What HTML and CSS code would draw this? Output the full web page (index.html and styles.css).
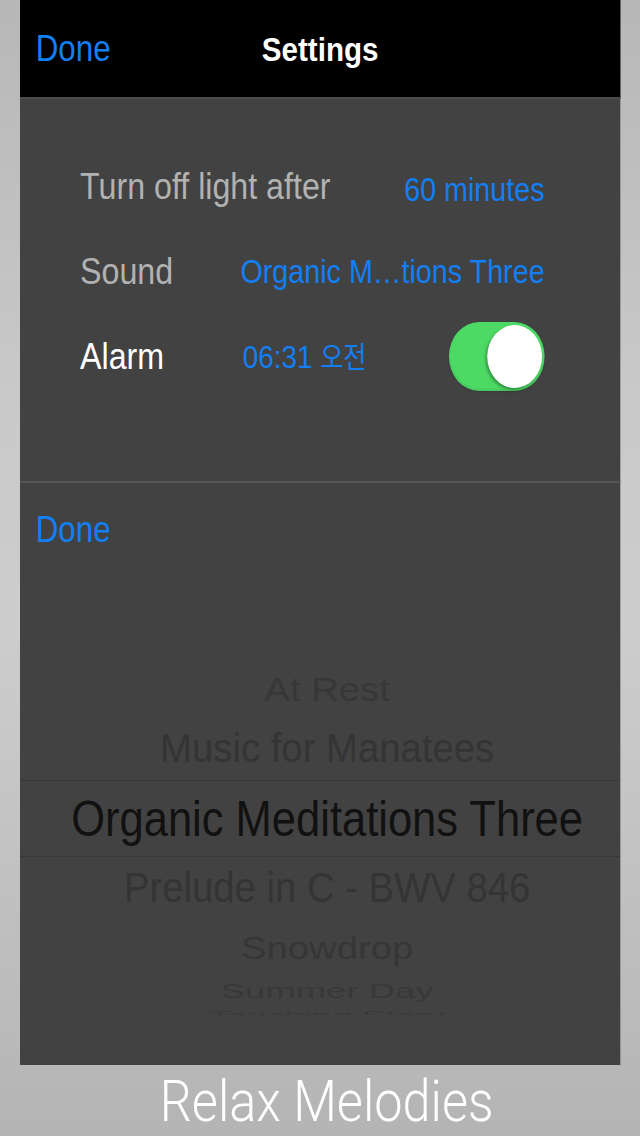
FILE: index.html
```html
<!DOCTYPE html>
<html lang="en">
<head>
    <meta charset="UTF-8">
    <meta name="viewport" content="width=device-width, initial-scale=1.0">
    <title>Relax Melodies - Settings</title>
    <link rel="stylesheet" href="styles.css">
</head>
<body>
    <div class="stage">
        <div class="phone">
            <!-- Navigation bar -->
            <div class="navbar">
                <span class="nav-done">Done</span>
                <span class="nav-title">Settings</span>
                <span></span>
            </div>

            <!-- Settings list -->
            <div class="settings">
                <div class="row">
                    <span class="label">Turn off light after</span>
                    <span class="value value-low">60 minutes</span>
                </div>
                <div class="row">
                    <span class="label">Sound</span>
                    <span class="value">Organic M…tions Three</span>
                </div>
                <div class="row">
                    <span class="label label-on alarm-label">Alarm</span>
                    <span class="value time">06:31 <span class="ko">오전</span></span>
                    <span class="switch"><span class="knob"></span></span>
                </div>
            </div>

            <!-- Sound picker -->
            <div class="picker-head">
                <span class="nav-done">Done</span>
            </div>
            <div class="picker">
                <div class="item item-a"><span>At Rest</span></div>
                <div class="item item-b"><span>Music for Manatees</span></div>
                <div class="item item-selected"><span>Organic Meditations Three</span></div>
                <div class="item item-c"><span>Prelude in C - BWV 846</span></div>
                <div class="item item-d"><span>Snowdrop</span></div>
                <div class="item item-e"><span>Summer Day</span></div>
                <div class="item item-f"><span>Touching Story</span></div>
            </div>
        </div>
        <div class="caption">Relax Melodies</div>
    </div>
</body>
</html>
```

FILE: styles.css
```css
html, body {
    margin: 0;
    height: 1136px;
    overflow: hidden;
}
body {
    font-family: "Liberation Sans", Arial, sans-serif;
    background: linear-gradient(#b7b7b7 0%, #c9c9c9 35%, #cdcdcd 55%, #bdbdbd 85%, #b4b4b4 100%);
}
/* the screen is drawn a bit narrow, so lay out wide and squeeze */
.stage {
    width: 736px;
    margin-right: -96px;
    transform: scaleX(0.87);
    transform-origin: 0 0;
}
.phone {
    margin-left: 23px;
    width: 690px;
    height: 1065px;
    background-color: #424242;
    display: flex;
    flex-direction: column;
}
.navbar {
    height: 97px;
    background-color: #000;
    border-bottom: 2px solid #4b4b4b;
    display: grid;
    grid-template-columns: 1fr auto 1fr;
    align-items: center;
    padding-left: 18px;
    padding-right: 18px;
}
.nav-done {
    color: #127ff4;
    font-size: 36px;
    line-height: 36px;
}
.nav-title {
    color: #fff;
    font-size: 34px;
    font-weight: bold;
    line-height: 36px;
}
.settings {
    padding: 45px 87px 82px 69px;
    border-bottom: 2px solid #555;
}
.row {
    height: 85px;
    display: flex;
    align-items: center;
    justify-content: space-between;
}
.label {
    color: #b2b2b2;
    font-size: 37px;
    line-height: 1;
}
.label-on {
    color: #fff;
}
.alarm-label {
    width: 187px;
}
.value {
    color: #127ff4;
    font-size: 33px;
    line-height: 1;
}
.value-low {
    padding-top: 6px;
}
.time {
    font-size: 32px;
    margin-right: auto;
}
.ko {
    font-family: "Noto Sans CJK KR", sans-serif;
    font-size: 29px;
}
.switch {
    width: 110px;
    height: 69px;
    border-radius: 35px;
    background-color: #4cd964;
    box-shadow: inset 0 -2px 3px rgba(0, 0, 0, 0.08), 0 1px 2px rgba(0, 0, 0, 0.15);
    display: flex;
    align-items: center;
    justify-content: flex-end;
    padding-right: 3px;
    box-sizing: border-box;
}
.knob {
    width: 63px;
    height: 63px;
    border-radius: 50%;
    background-color: #fff;
    box-shadow: -2px 2px 3px rgba(0, 0, 0, 0.3);
}
.picker-head {
    padding: 29px 18px 0;
}
.picker {
    margin-top: 115px;
    padding-left: 16px;
    height: 352px;
    overflow: hidden;
    display: flex;
    flex-direction: column;
}
.item {
    flex-shrink: 0;
    display: flex;
    align-items: center;
    justify-content: center;
    color: #343434;
    font-size: 44px;
    line-height: 1;
    white-space: nowrap;
}
.item span {
    display: inline-block;
}
.item-a { height: 52px; color: #373737; }
.item-a span { transform: scaleY(0.77); }
.item-b { height: 65px; }
.item-b span { transform: scaleY(0.93); }
.item-selected {
    height: 75px;
    margin-left: -16px;
    padding-left: 16px;
    border-top: 1px solid #383838;
    border-bottom: 1px solid #383838;
    color: #111;
    font-size: 50px;
}
.item-c { height: 62px; }
.item-c span { transform: scaleY(0.96); }
.item-d { height: 57px; color: #363636; }
.item-d span { transform: scaleY(0.73); }
.item-e { height: 29px; font-size: 42px; color: #383838; }
.item-e span { transform: scaleY(0.48); }
.item-f { height: 20px; font-size: 41px; color: #3a3a3a; }
.item-f span { transform: scaleY(0.3); }
.caption {
    height: 71px;
    padding-left: 15px;
    display: flex;
    align-items: center;
    justify-content: center;
    color: #fff;
    font-family: Roboto, "Liberation Sans", sans-serif;
    font-weight: 300;
    font-size: 58px;
    line-height: 1;
}
```
